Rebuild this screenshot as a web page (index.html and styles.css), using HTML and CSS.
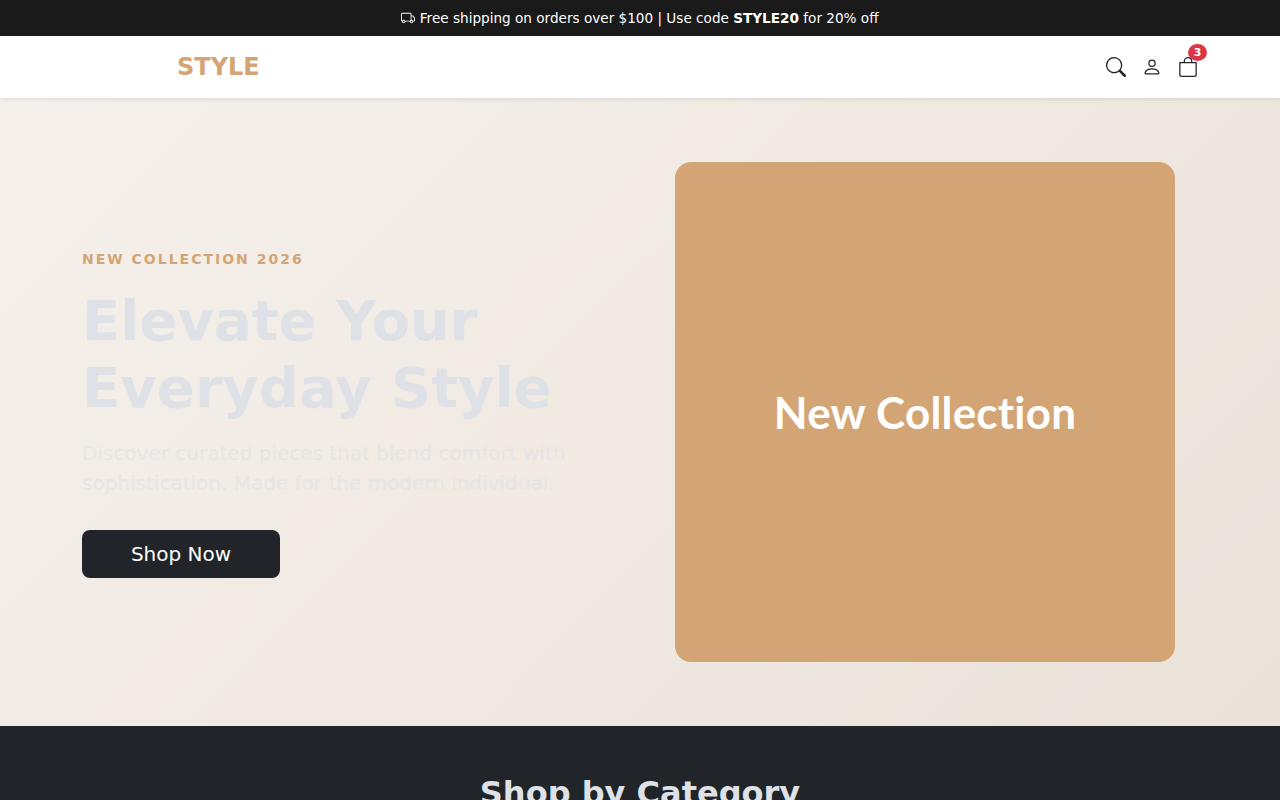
FILE: index.html
```html
<!DOCTYPE html>
<html lang="en">
<head>
  <meta charset="UTF-8" />
  <meta name="viewport" content="width=device-width, initial-scale=1.0"/>
  <title>STYLE</title>
  <link rel="stylesheet" href="styles.css">
</head>
<body>

  <div class="promo">
    <svg class="promo-icon" viewBox="0 0 16 16" width="14" height="14" fill="currentColor"><path d="M0 3.5A1.5 1.5 0 0 1 1.500 2h9A1.500 1.500 0 0 1 12 3.500V5h1.020a1.500 1.500 0 0 1 1.170.563l1.481 1.850a1.500 1.500 0 0 1 .329.938V10.500a1.500 1.500 0 0 1-1.500 1.500H14a2 2 0 1 1-4 0H5a2 2 0 1 1-3.998-.085A1.500 1.500 0 0 1 0 10.500v-7zm1.294 7.456A1.999 1.999 0 0 1 4.732 11h5.536a2.010 2.010 0 0 1 .732-.732V3.500a.5.500 0 0 0-.5-.5h-9a.5.500 0 0 0-.5.500v7a.5.500 0 0 0 .294.456zM12 10a2 2 0 0 1 1.732 1h.768a.5.500 0 0 0 .5-.5V8.350a.5.500 0 0 0-.11-.312l-1.480-1.850A.5.500 0 0 0 13.020 6H12v4zm-9 1a1 1 0 1 0 0 2 1 1 0 0 0 0-2zm9 0a1 1 0 1 0 0 2 1 1 0 0 0 0-2z"/></svg>
    Free shipping on orders over $100 | Use code <strong>STYLE20</strong> for 20% off
  </div>

  <nav class="navbar">
    <a class="logo" href="#">STYLE</a>
    <div class="nav-icons">
      <a href="#" class="icon-link">
        <svg viewBox="0 0 16 16" width="20" height="20" fill="currentColor"><path d="M11.742 10.344a6.500 6.500 0 1 0-1.397 1.398h-.001c.03.040.062.078.098.115l3.850 3.850a1 1 0 0 0 1.415-1.414l-3.850-3.850a1.007 1.007 0 0 0-.115-.100zM12 6.500a5.500 5.500 0 1 1-11 0 5.500 5.500 0 0 1 11 0z"/></svg>
      </a>
      <a href="#" class="icon-link">
        <svg viewBox="0 0 16 16" width="20" height="20" fill="currentColor"><path d="M8 8a3 3 0 1 0 0-6 3 3 0 0 0 0 6zm2-3a2 2 0 1 1-4 0 2 2 0 0 1 4 0zm4 8c0 1-1 1-1 1H3s-1 0-1-1 1-4 6-4 6 3 6 4zm-1-.004c-.001-.246-.154-.986-.832-1.664C11.516 10.680 10.289 10 8 10c-2.290 0-3.516.680-4.168 1.332-.678.678-.830 1.418-.832 1.664h10z"/></svg>
      </a>
      <a href="#" class="icon-link cart">
        <svg viewBox="0 0 16 16" width="20" height="20" fill="currentColor"><path d="M8 1a2.500 2.500 0 0 1 2.500 2.500V4h-5v-.5A2.500 2.500 0 0 1 8 1zm3.500 3v-.5a3.500 3.500 0 1 0-7 0V4H1v10a2 2 0 0 0 2 2h10a2 2 0 0 0 2-2V4h-3.500zM2 5h12v9a1 1 0 0 1-1 1H3a1 1 0 0 1-1-1V5z"/></svg>
        <span class="cart-badge">3</span>
      </a>
    </div>
  </nav>

  <section class="hero">
    <div class="container hero-row">
      <div class="hero-text">
        <p class="eyebrow">NEW COLLECTION 2026</p>
        <h1>Elevate Your Everyday Style</h1>
        <p class="lead">Discover curated pieces that blend comfort with sophistication. Made for the modern individual.</p>
        <a href="#" class="btn-shop">Shop Now</a>
      </div>
      <div class="hero-media">
        <div class="hero-card">New Collection</div>
      </div>
    </div>
  </section>

  <section class="categories">
    <h2>Shop by Category</h2>
  </section>

</body>
</html>
```

FILE: styles.css
```css
* {
  box-sizing: border-box;
}

body {
  margin: 0;
  font-family: "DejaVu Sans", sans-serif;
  font-size: 16px;
  line-height: 1.5;
  color: #dee2e6;
  background: #212529;
}

a {
  text-decoration: none;
}

.promo {
  height: 36px;
  background: #1a1a1a;
  color: #fff;
  font-size: 13.6px;
  line-height: 36px;
  text-align: center;
}

.promo-icon {
  vertical-align: -2px;
}

.navbar {
  height: 62px;
  background: #fff;
  display: flex;
  align-items: center;
  justify-content: space-between;
  padding: 0 82px 0 177px;
  box-shadow: 0 2px 4px rgba(0,0,0,0.075);
  position: relative;
}

.logo {
  color: #d4a574;
  font-size: 24px;
  font-weight: 700;
}

.nav-icons {
  display: flex;
  align-items: center;
  gap: 16px;
}

.icon-link {
  color: #212529;
  display: flex;
  position: relative;
}

.cart-badge {
  position: absolute;
  top: -13px;
  right: -9px;
  width: 19px;
  height: 17px;
  border-radius: 50%;
  background: #dc3545;
  color: #fff;
  font-size: 11px;
  font-weight: 700;
  line-height: 17px;
  text-align: center;
}

.hero {
  height: 628px;
  background: linear-gradient(135deg, #f5f0eb, #ebe3da);
  display: flex;
  align-items: center;
}

.container {
  width: 1140px;
  margin: 0 auto;
}

.hero-row {
  display: flex;
  align-items: center;
}

.hero-text,
.hero-media {
  width: 570px;
  padding: 0 12px;
}

.hero-text {
  padding-top: 3px;
}

.hero-media {
  display: flex;
  justify-content: center;
}

.eyebrow {
  margin: 0 0 17px;
  color: #d4a574;
  font-size: 14px;
  font-weight: 700;
  letter-spacing: 2px;
}

h1 {
  margin: 0 0 17px;
  color: #dee2e6;
  font-size: 56px;
  font-weight: 700;
  line-height: 1.2;
}

.lead {
  margin: 0 0 32px;
  color: #dee2e6;
  opacity: 0.6;
  font-size: 20px;
  line-height: 1.5;
}

.btn-shop {
  display: inline-block;
  width: 198px;
  height: 48px;
  border-radius: 8px;
  background: #212529;
  color: #fff;
  font-size: 20px;
  line-height: 48px;
  text-align: center;
}

.hero-card {
  width: 500px;
  height: 500px;
  border-radius: 16px;
  background: #d4a574;
  color: #fff;
  font-family: Lato, sans-serif;
  font-size: 44px;
  font-weight: 700;
  letter-spacing: 0.2px;
  display: flex;
  align-items: center;
  justify-content: center;
}

.categories {
  padding: 48px 0;
  text-align: center;
}

h2 {
  margin: 0;
  color: #dee2e6;
  font-size: 32px;
  font-weight: 700;
  line-height: 1.2;
}
```
